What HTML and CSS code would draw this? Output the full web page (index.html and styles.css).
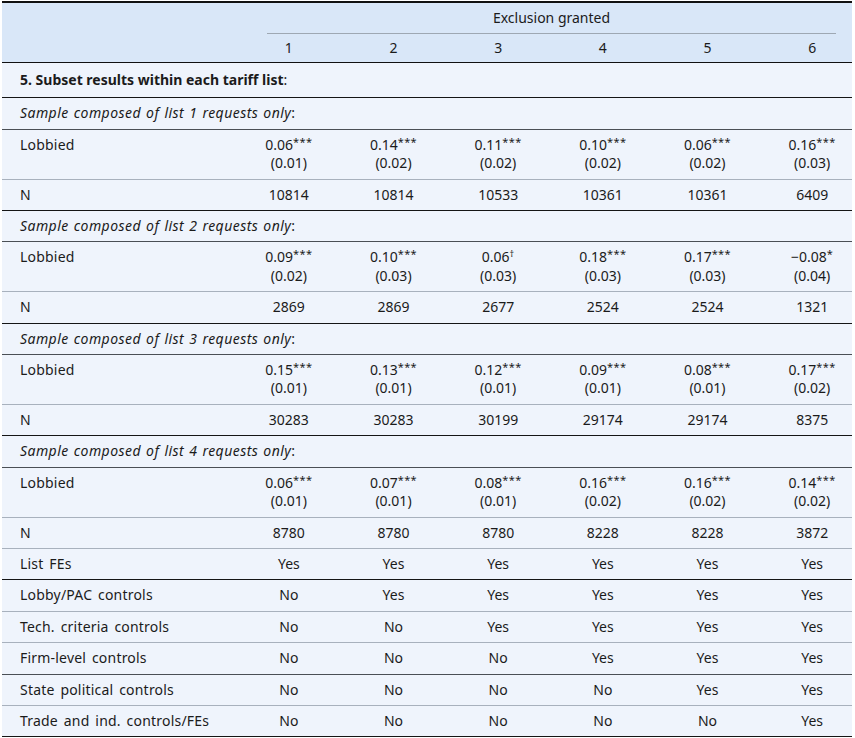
FILE: index.html
```html
<!DOCTYPE html>
<html>
<head>
<meta charset="utf-8">
<link rel="stylesheet" href="styles.css">
</head>
<body>
<table class="tbl">
  <colgroup>
    <col class="c-label">
    <col class="c-num"><col class="c-num"><col class="c-num"><col class="c-num"><col class="c-num"><col class="c-num">
  </colgroup>
  <thead>
    <tr class="h1">
      <th></th>
      <th colspan="6" class="span"><div class="span-text">Exclusion granted</div></th>
    </tr>
    <tr class="h2">
      <th></th><th>1</th><th>2</th><th>3</th><th>4</th><th>5</th><th>6</th>
    </tr>
  </thead>
  <tbody>
    <tr class="section dark"><td colspan="7"><b>5. Subset results within each tariff list</b>:</td></tr>

    <tr class="sub mid"><td colspan="7"><i>Sample composed of list 1 requests only</i>:</td></tr>
    <tr class="grey"><td>Lobbied</td><td>0.06<sup>***</sup><br>(0.01)</td><td>0.14<sup>***</sup><br>(0.02)</td><td>0.11<sup>***</sup><br>(0.02)</td><td>0.10<sup>***</sup><br>(0.02)</td><td>0.06<sup>***</sup><br>(0.02)</td><td>0.16<sup>***</sup><br>(0.03)</td></tr>
    <tr class="dark"><td>N</td><td>10814</td><td>10814</td><td>10533</td><td>10361</td><td>10361</td><td>6409</td></tr>

    <tr class="sub mid"><td colspan="7"><i>Sample composed of list 2 requests only</i>:</td></tr>
    <tr class="grey"><td>Lobbied</td><td>0.09<sup>***</sup><br>(0.02)</td><td>0.10<sup>***</sup><br>(0.03)</td><td>0.06<sup class="dag">†</sup><br>(0.03)</td><td>0.18<sup>***</sup><br>(0.03)</td><td>0.17<sup>***</sup><br>(0.03)</td><td>−0.08<sup>*</sup><br>(0.04)</td></tr>
    <tr class="dark"><td>N</td><td>2869</td><td>2869</td><td>2677</td><td>2524</td><td>2524</td><td>1321</td></tr>

    <tr class="sub mid"><td colspan="7"><i>Sample composed of list 3 requests only</i>:</td></tr>
    <tr class="grey"><td>Lobbied</td><td>0.15<sup>***</sup><br>(0.01)</td><td>0.13<sup>***</sup><br>(0.01)</td><td>0.12<sup>***</sup><br>(0.01)</td><td>0.09<sup>***</sup><br>(0.01)</td><td>0.08<sup>***</sup><br>(0.01)</td><td>0.17<sup>***</sup><br>(0.02)</td></tr>
    <tr class="dark"><td>N</td><td>30283</td><td>30283</td><td>30199</td><td>29174</td><td>29174</td><td>8375</td></tr>

    <tr class="sub mid"><td colspan="7"><i>Sample composed of list 4 requests only</i>:</td></tr>
    <tr class="grey"><td>Lobbied</td><td>0.06<sup>***</sup><br>(0.01)</td><td>0.07<sup>***</sup><br>(0.01)</td><td>0.08<sup>***</sup><br>(0.01)</td><td>0.16<sup>***</sup><br>(0.02)</td><td>0.16<sup>***</sup><br>(0.02)</td><td>0.14<sup>***</sup><br>(0.02)</td></tr>
    <tr class="grey"><td>N</td><td>8780</td><td>8780</td><td>8780</td><td>8228</td><td>8228</td><td>3872</td></tr>

    <tr class="dark"><td>List FEs</td><td>Yes</td><td>Yes</td><td>Yes</td><td>Yes</td><td>Yes</td><td>Yes</td></tr>
    <tr class="grey"><td>Lobby/PAC controls</td><td>No</td><td>Yes</td><td>Yes</td><td>Yes</td><td>Yes</td><td>Yes</td></tr>
    <tr class="grey"><td>Tech. criteria controls</td><td>No</td><td>No</td><td>Yes</td><td>Yes</td><td>Yes</td><td>Yes</td></tr>
    <tr class="mid"><td>Firm-level controls</td><td>No</td><td>No</td><td>No</td><td>Yes</td><td>Yes</td><td>Yes</td></tr>
    <tr class="grey"><td>State political controls</td><td>No</td><td>No</td><td>No</td><td>No</td><td>Yes</td><td>Yes</td></tr>
    <tr class="dark"><td>Trade and ind. controls/FEs</td><td>No</td><td>No</td><td>No</td><td>No</td><td>No</td><td>Yes</td></tr>
  </tbody>
</table>
</body>
</html>
```
FILE: styles.css
```css
html, body {
  margin: 0;
  padding: 0;
  background: #ffffff;
}
body {
  padding: 1px 0 0 2px;
  font-family: "Noto Sans", "Open Sans", sans-serif;
  font-size: 14px;
  color: #1b1b1b;
}
.tbl {
  width: 850px;
  border-collapse: collapse;
  table-layout: fixed;
  border-top: 2px solid #111;
}
.c-label { width: 222px; }
.c-num { width: 104.66px; }

thead th {
  background: #d9e7f8;
  font-weight: normal;
  line-height: 18px;
  text-align: center;
  padding: 0 0 0 25px;
}
thead th:first-child { padding: 0; }
.h1 th { height: 31px; vertical-align: middle; padding: 0; }
.h1 th.span { padding: 0; }
.span-text {
  margin: 0 16px 0 43px;
  border-bottom: 1px solid #9ea8b3;
  padding: 6px 0 6px 0;
}
.h2 th {
  height: 27px;
  padding-top: 0;
  padding-bottom: 1px;
  vertical-align: middle;
  border-bottom: 1px solid #111;
}

tbody td {
  background: #eff4fc;
  line-height: 18.4px;
  padding: 6px 0 6px 25px;
  vertical-align: top;
  text-align: center;
  border-bottom: 1px solid #a8b1bd;
}
tbody td:first-child {
  text-align: left;
  padding-left: 18px;
  letter-spacing: 0.2px;
  word-spacing: 2px;
}
tbody tr.section td {
  padding-top: 8px;
  padding-bottom: 8px;
  letter-spacing: 0;
  word-spacing: 0;
}
tbody tr.sub td {
  letter-spacing: 0.45px;
  word-spacing: 1px;
}
tbody tr.dark td { border-bottom-color: #151515; }
tbody tr.mid td { border-bottom-color: #4a4f55; }
tbody tr.grey td { border-bottom-color: #a8b1bd; }

sup {
  font-size: 11px;
  line-height: 0;
  vertical-align: 4px;
  letter-spacing: 0.4px;
}
sup.dag {
  font-size: 9px;
  vertical-align: 5px;
}
b { font-weight: bold; }
i { font-style: italic; }
```
